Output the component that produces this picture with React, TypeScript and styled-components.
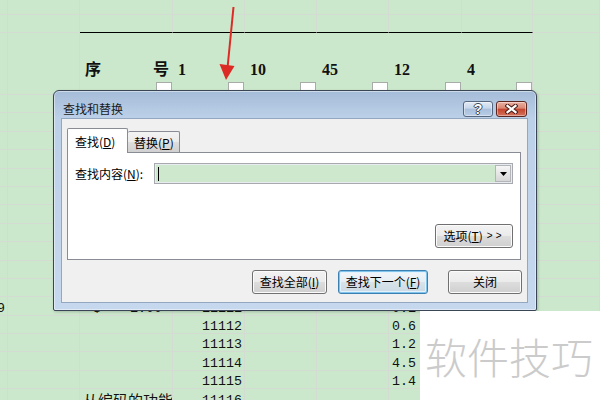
import React from 'react';
import styled, { createGlobalStyle } from 'styled-components';

const LINE = '#d3dbd3';

const GlobalStyle = createGlobalStyle`
  html, body {
    margin: 0;
    padding: 0;
  }
  body {
    width: 600px;
    height: 400px;
    overflow: hidden;
    background: #cce8cc;
  }
`;

type Align = 'left' | 'right' | 'split';

const COLS = 9;
const BODY_ROWS = 18;

function alignFor(row: number, col: number): Align {
  if (col === 0 || col === 3) return 'right';
  if (col === 2 && row === 11) return 'split';
  return 'left';
}

const App = () => {
  const headers: { col: number; text: React.ReactNode }[] = [
    { col: 2, text: <><span>序</span><span>号</span></> },
    { col: 3, text: '1' },
    { col: 4, text: '10' },
    { col: 5, text: '45' },
    { col: 6, text: '12' },
    { col: 7, text: '4' },
  ];

  const body: { [row: number]: { [col: number]: React.ReactNode } } = {
    11: { 0: '9', 2: <><span>$</span><span>1.00</span></>, 3: '11111', 6: '0.1' },
    12: { 3: '11112', 6: '0.6' },
    13: { 3: '11113', 6: '1.2' },
    14: { 3: '11114', 6: '4.5' },
    15: { 3: '11115', 6: '1.4' },
    16: { 2: <Han>从编码的功能</Han>, 3: '11116' },
  };

  const top = [0, 1].map(r =>
    Array.from({ length: COLS }, (_, c) => (
      <Cell key={`t${r}-${c}`} $rule={r === 1 && c >= 2 && c <= 7} />
    ))
  );

  const head = Array.from({ length: COLS }, (_, c) => {
    const h = headers.find(x => x.col === c);
    return (
      <HeadCell key={`h${c}`} $open={c >= 2 && c <= 6}>
        {h && <HeadText>{h.text}</HeadText>}
        {c >= 2 && c <= 7 && <FilterBox />}
      </HeadCell>
    );
  });

  const rows = Array.from({ length: BODY_ROWS }, (_, r) =>
    Array.from({ length: COLS }, (_, c) => (
      <Cell key={`b${r}-${c}`} $align={alignFor(r, c)}>
        {body[r]?.[c]}
      </Cell>
    ))
  );

  return (
    <Page>
      <GlobalStyle />
      <Grid>
        {top}
        {head}
        {rows}
      </Grid>

      <Arrow width="600" height="100" viewBox="0 0 600 100">
        <line x1="233.5" y1="7" x2="227.5" y2="68" stroke="#dc2a24" strokeWidth="2" />
        <polygon points="219.5,64 234.5,66 226,80" fill="#dc2a24" />
      </Arrow>

      <Dialog>
        <TitleBar>
          <Title>查找和替换</Title>
          <CaptionButtons>
            <CaptionButton $kind="help">?</CaptionButton>
            <CaptionButton $kind="close">
              <svg width="13" height="10" viewBox="0 0 13 10">
                <path d="M2.5 1.8 L10.5 8.2 M10.5 1.8 L2.5 8.2" stroke="#4b1d16" strokeWidth="4.2" strokeLinecap="square" />
                <path d="M2.5 1.8 L10.5 8.2 M10.5 1.8 L2.5 8.2" stroke="#fff" strokeWidth="2.2" strokeLinecap="square" />
              </svg>
            </CaptionButton>
          </CaptionButtons>
        </TitleBar>

        <Client>
          <Tabs>
            <Tab $active>查找(<u>D</u>)</Tab>
            <Tab>替换(<u>P</u>)</Tab>
          </Tabs>
          <TabPanel>
            <FindRow>
              <Label>查找内容(<u>N</u>):</Label>
              <Combo>
                <Caret />
                <DropButton>
                  <svg width="7" height="4" viewBox="0 0 7 4">
                    <polygon points="0,0 7,0 3.5,4" fill="#000" />
                  </svg>
                </DropButton>
              </Combo>
            </FindRow>
            <OptionsRow>
              <Button $w={78}>
                选项(<u>T</u>) <Chevrons>&gt;&gt;</Chevrons>
              </Button>
            </OptionsRow>
          </TabPanel>
          <ButtonRow>
            <Button $w={75}>查找全部(<u>I</u>)</Button>
            <Button $w={90} $gap={11} $default>查找下一个(<u>F</u>)</Button>
            <Button $w={74} $gap={20}>关闭</Button>
          </ButtonRow>
        </Client>
      </Dialog>

      <Watermark>软件技巧</Watermark>
    </Page>
  );
};

const Page = styled.div`
  position: relative;
  width: 600px;
  height: 400px;
  overflow: hidden;
  background: #cce8cc;
`;

const Grid = styled.div`
  display: grid;
  grid-template-columns: 8px 72px 93px 72px 72px 72px 73px 71px 1fr;
  grid-template-rows: 15px 18px 62px;
  grid-auto-rows: 18.4px;
  height: 100%;
`;

const Cell = styled.div<{ $rule?: boolean; $align?: Align }>`
  box-sizing: border-box;
  min-width: 0;
  overflow: hidden;
  display: flex;
  align-items: flex-end;
  justify-content: ${({ $align }) =>
    $align === 'right' ? 'flex-end' : $align === 'split' ? 'space-between' : 'flex-start'};
  padding: ${({ $align }) => ($align === 'split' ? '0 10px 0 13px' : '0 2px 0 3px')};
  border-right: 1px solid ${LINE};
  border-bottom: 1px solid ${({ $rule }) => ($rule ? '#000' : LINE)};
  font: 13.3px/12px "Liberation Mono", monospace;
  color: #111;
  white-space: nowrap;
`;

const Han = styled.span`
  font: 15px/14px "Noto Sans CJK SC", sans-serif;
`;

const HeadCell = styled.div<{ $open?: boolean }>`
  box-sizing: border-box;
  min-width: 0;
  display: flex;
  flex-direction: column;
  padding: 29px 0 0 5px;
  border-right: 1px solid ${({ $open }) => ($open ? 'transparent' : LINE)};
  border-bottom: 1px solid ${LINE};
`;

const HeadText = styled.div`
  display: flex;
  justify-content: space-between;
  padding-right: 3px;
  font: bold 16px/16px "Liberation Serif", "Noto Sans CJK SC", serif;
  color: #111;
`;

const FilterBox = styled.span`
  margin-top: auto;
  align-self: flex-end;
  width: 16px;
  height: 12px;
  box-sizing: border-box;
  background: #fff;
  border: 1px solid #a8aca8;
  border-bottom: none;
`;

const Arrow = styled.svg`
  position: absolute;
  left: 0;
  top: 0;
  pointer-events: none;
`;

const Dialog = styled.div`
  position: absolute;
  left: 53px;
  top: 90px;
  width: 484px;
  height: 221px;
  box-sizing: border-box;
  display: flex;
  flex-direction: column;
  padding: 0 8px 7px 7px;
  border: 1px solid #3a4656;
  border-radius: 6px 6px 2px 2px;
  background: linear-gradient(180deg, #a5bcd8 0px, #bcd0e8 27px, #c6d8ee 100%);
  box-shadow: inset 0 0 0 1px rgba(255, 255, 255, 0.45), 1px 1px 3px rgba(0, 0, 0, 0.2);
  font: 12px/16px "Noto Sans CJK SC", "Liberation Sans", sans-serif;
  color: #000;
`;

const TitleBar = styled.div`
  height: 27px;
  box-sizing: border-box;
  display: flex;
  align-items: flex-start;
  justify-content: space-between;
  padding: 10px 0 0 2px;
`;

const Title = styled.div`
  font-size: 12px;
  line-height: 16px;
  color: #1a1a1a;
`;

const CaptionButtons = styled.div`
  display: flex;
  gap: 3px;
  margin-right: 1px;
`;

const CaptionButton = styled.div<{ $kind: 'help' | 'close' }>`
  width: ${({ $kind }) => ($kind === 'help' ? 30 : 31)}px;
  height: 16px;
  box-sizing: border-box;
  display: flex;
  align-items: center;
  justify-content: center;
  border-radius: 3px;
  border: 1px solid ${({ $kind }) => ($kind === 'help' ? '#56687f' : '#5b2520')};
  background: ${({ $kind }) =>
    $kind === 'help'
      ? 'linear-gradient(180deg, #e3ebf5 0%, #c6d6ea 45%, #a8bedb 50%, #b9cde6 100%)'
      : 'linear-gradient(180deg, #eab0a3 0%, #d98671 45%, #c4432d 50%, #d3735c 100%)'};
  box-shadow: inset 0 0 0 1px rgba(255, 255, 255, 0.4);
  font: bold 14px/14px "Liberation Sans", sans-serif;
  color: #fff;
  text-shadow: 1px 0 0 #3a4a60, -1px 0 0 #3a4a60, 0 1px 0 #3a4a60, 0 -1px 0 #3a4a60;
`;

const Client = styled.div`
  flex: 1;
  display: flex;
  flex-direction: column;
  padding: 9px 6px 8px 5px;
  border: 1px solid #94a7c0;
  background: #f0f0f0;
`;

const Tabs = styled.div`
  position: relative;
  z-index: 1;
  height: 24px;
  display: flex;
  align-items: flex-end;
`;

const Tab = styled.div<{ $active?: boolean }>`
  box-sizing: border-box;
  width: ${({ $active }) => ($active ? 61 : 52)}px;
  height: ${({ $active }) => ($active ? 25 : 21)}px;
  margin-bottom: ${({ $active }) => ($active ? -1 : 0)}px;
  padding: ${({ $active }) => ($active ? '5px 0 0 7px' : '3px 0 0 6px')};
  border: 1px solid #898c95;
  border-bottom: none;
  border-left: ${({ $active }) => ($active ? '1px solid #898c95' : 'none')};
  border-radius: 2px 2px 0 0;
  background: ${({ $active }) =>
    $active ? '#fff' : 'linear-gradient(180deg, #f3f3f3 0%, #ebebeb 50%, #dedede 51%, #d0d0d0 100%)'};
  white-space: nowrap;
`;

const TabPanel = styled.div`
  height: 108px;
  box-sizing: border-box;
  display: flex;
  flex-direction: column;
  padding: 10px 7px 11px 7px;
  border: 1px solid #898c95;
  background: #fff;
`;

const FindRow = styled.div`
  display: flex;
  align-items: center;
  height: 21px;
`;

const Label = styled.div`
  width: 79px;
  flex-shrink: 0;
  white-space: nowrap;
`;

const Combo = styled.div`
  flex: 1;
  height: 21px;
  box-sizing: border-box;
  display: flex;
  align-items: center;
  justify-content: space-between;
  padding: 1px 1px 1px 3px;
  border: 1px solid #a7a9ae;
  background: #cde8cd;
  box-shadow: inset 0 0 0 1px #e6ecf0;
`;

const Caret = styled.span`
  width: 1px;
  height: 14px;
  background: #000;
`;

const DropButton = styled.div`
  width: 16px;
  height: 17px;
  box-sizing: border-box;
  display: flex;
  align-items: center;
  justify-content: center;
  border: 1px solid #b3b5b8;
  background: linear-gradient(180deg, #f6f6f6 0%, #e6e6e6 50%, #d6d6d6 100%);
`;

const OptionsRow = styled.div`
  margin-top: auto;
  display: flex;
  justify-content: flex-end;
`;

const ButtonRow = styled.div`
  margin-top: 10px;
  display: flex;
  justify-content: flex-end;
  margin-right: -1px;
`;

const Button = styled.div<{ $w: number; $gap?: number; $default?: boolean }>`
  width: ${({ $w }) => $w}px;
  height: 24px;
  margin-left: ${({ $gap }) => $gap ?? 0}px;
  box-sizing: border-box;
  display: flex;
  align-items: center;
  justify-content: center;
  border: 1px solid ${({ $default }) => ($default ? '#3c7fb1' : '#707070')};
  border-radius: 3px;
  background: ${({ $default }) =>
    $default
      ? 'linear-gradient(180deg, #f1f6f9 0%, #e6eef3 50%, #d8e3ea 51%, #cbd9e3 100%)'
      : 'linear-gradient(180deg, #f2f2f2 0%, #ebebeb 50%, #dddddd 51%, #cfcfcf 100%)'};
  box-shadow: ${({ $default }) =>
    $default ? 'inset 0 0 0 1px #7ec4ec, inset 0 0 0 2px #e4f2fb' : 'inset 0 0 0 1px #fbfbfb'};
  white-space: nowrap;
`;

const Chevrons = styled.span`
  margin-left: 4px;
  font: 10px/16px "Liberation Sans", sans-serif;
  letter-spacing: 3px;
`;

const Watermark = styled.div`
  position: absolute;
  left: 420px;
  top: 311px;
  width: 180px;
  height: 89px;
  box-sizing: border-box;
  display: flex;
  align-items: center;
  padding-left: 5px;
  background: #fff;
  font: 300 42px/1 "Noto Sans CJK SC", sans-serif;
  color: #cbcbcb;
  white-space: nowrap;
`;

export default App;
